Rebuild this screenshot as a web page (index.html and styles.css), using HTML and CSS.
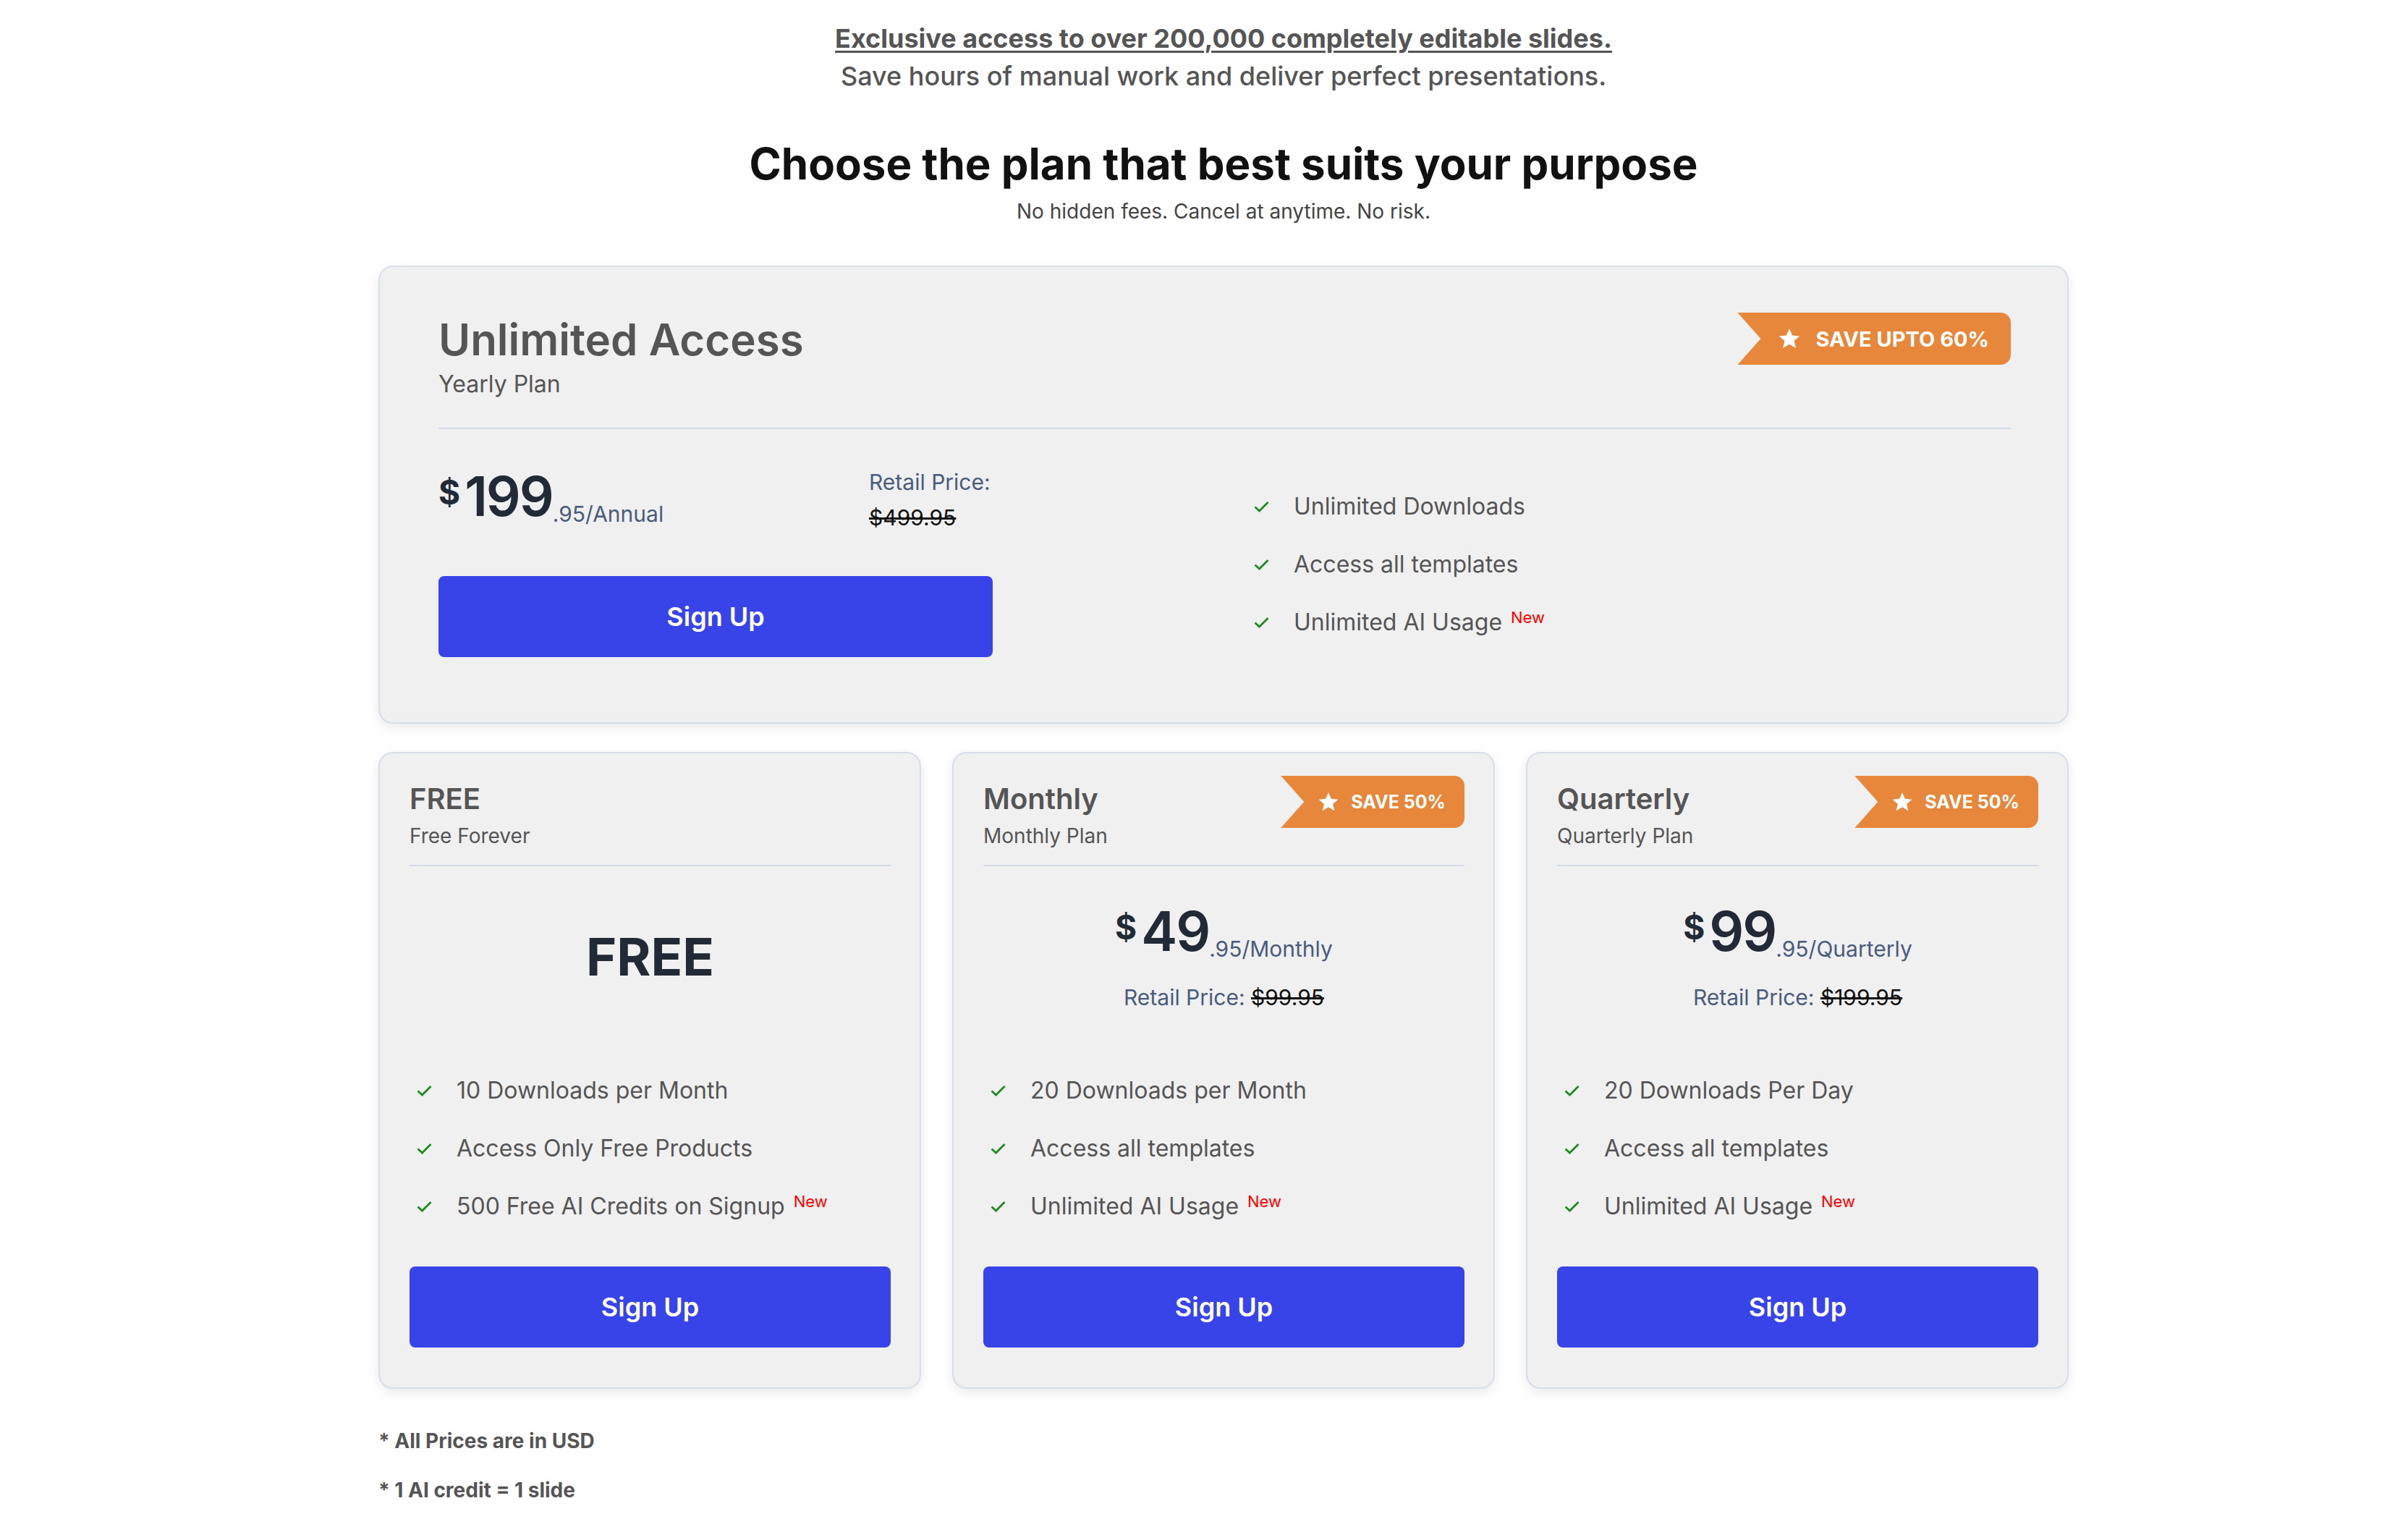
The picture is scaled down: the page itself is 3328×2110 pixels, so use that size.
FILE: index.html
```html
<!DOCTYPE html>
<html lang="en">
<head>
    <meta charset="UTF-8">
    <meta name="viewport" content="width=device-width, initial-scale=1.0">
    <link rel="stylesheet" href="styles.css">
    <title>Pricing</title>
</head>
<body>
    <div class="page">
        <header class="intro">
            <p class="intro-lead"><a href="#">Exclusive access to over 200,000 completely editable slides.</a></p>
            <p class="intro-sub">Save hours of manual work and deliver perfect presentations.</p>
            <h1>Choose the plan that best suits your purpose</h1>
            <p class="intro-note">No hidden fees. Cancel at anytime. No risk.</p>
        </header>

        <section class="plan plan-yearly">
            <div class="plan-head">
                <div>
                    <h2 class="yearly-title">Unlimited Access</h2>
                    <p class="yearly-sub">Yearly Plan</p>
                </div>
                <span class="badge badge-lg">
                    <svg class="star" viewBox="0 0 24 24"><path d="M12 1.5l3.1 7.1 7.6.7-5.8 5 1.8 7.5L12 17.8l-6.7 4 1.8-7.5-5.8-5 7.6-.7z"/></svg>
                    SAVE UPTO 60%
                </span>
            </div>
            <div class="divider"></div>
            <div class="yearly-body">
                <div class="yearly-price">
                    <div class="price price-left">
                        <span class="cur">$</span><span class="amt">199</span><span class="per">.95/Annual</span>
                    </div>
                    <div class="retail retail-stack">
                        <span class="retail-label">Retail Price:</span>
                        <s class="retail-old">$499.95</s>
                    </div>
                    <a href="#" class="btn btn-wide">Sign Up</a>
                </div>
                <ul class="features">
                    <li><svg class="check" viewBox="0 0 22 16"><path d="M2 8.5l6 5.5L20 2"/></svg><span>Unlimited Downloads</span></li>
                    <li><svg class="check" viewBox="0 0 22 16"><path d="M2 8.5l6 5.5L20 2"/></svg><span>Access all templates</span></li>
                    <li><svg class="check" viewBox="0 0 22 16"><path d="M2 8.5l6 5.5L20 2"/></svg><span>Unlimited AI Usage<sup class="new">New</sup></span></li>
                </ul>
            </div>
        </section>

        <div class="plans">
            <article class="plan plan-card">
                <div class="plan-head">
                    <div>
                        <h3 class="card-title">FREE</h3>
                        <p class="card-sub">Free Forever</p>
                    </div>
                </div>
                <div class="divider"></div>
                <div class="price-area">
                    <div class="free-label">FREE</div>
                </div>
                <ul class="features">
                    <li><svg class="check" viewBox="0 0 22 16"><path d="M2 8.5l6 5.5L20 2"/></svg><span>10 Downloads per Month</span></li>
                    <li><svg class="check" viewBox="0 0 22 16"><path d="M2 8.5l6 5.5L20 2"/></svg><span>Access Only Free Products</span></li>
                    <li><svg class="check" viewBox="0 0 22 16"><path d="M2 8.5l6 5.5L20 2"/></svg><span>500 Free AI Credits on Signup<sup class="new">New</sup></span></li>
                </ul>
                <a href="#" class="btn">Sign Up</a>
            </article>

            <article class="plan plan-card">
                <div class="plan-head">
                    <div>
                        <h3 class="card-title">Monthly</h3>
                        <p class="card-sub">Monthly Plan</p>
                    </div>
                    <span class="badge">
                        <svg class="star" viewBox="0 0 24 24"><path d="M12 1.5l3.1 7.1 7.6.7-5.8 5 1.8 7.5L12 17.8l-6.7 4 1.8-7.5-5.8-5 7.6-.7z"/></svg>
                        SAVE 50%
                    </span>
                </div>
                <div class="divider"></div>
                <div class="price-area">
                    <div class="price">
                        <span class="cur">$</span><span class="amt">49</span><span class="per">.95/Monthly</span>
                    </div>
                    <div class="retail">Retail Price: <s>$99.95</s></div>
                </div>
                <ul class="features">
                    <li><svg class="check" viewBox="0 0 22 16"><path d="M2 8.5l6 5.5L20 2"/></svg><span>20 Downloads per Month</span></li>
                    <li><svg class="check" viewBox="0 0 22 16"><path d="M2 8.5l6 5.5L20 2"/></svg><span>Access all templates</span></li>
                    <li><svg class="check" viewBox="0 0 22 16"><path d="M2 8.5l6 5.5L20 2"/></svg><span>Unlimited AI Usage<sup class="new">New</sup></span></li>
                </ul>
                <a href="#" class="btn">Sign Up</a>
            </article>

            <article class="plan plan-card">
                <div class="plan-head">
                    <div>
                        <h3 class="card-title">Quarterly</h3>
                        <p class="card-sub">Quarterly Plan</p>
                    </div>
                    <span class="badge">
                        <svg class="star" viewBox="0 0 24 24"><path d="M12 1.5l3.1 7.1 7.6.7-5.8 5 1.8 7.5L12 17.8l-6.7 4 1.8-7.5-5.8-5 7.6-.7z"/></svg>
                        SAVE 50%
                    </span>
                </div>
                <div class="divider"></div>
                <div class="price-area">
                    <div class="price">
                        <span class="cur">$</span><span class="amt">99</span><span class="per">.95/Quarterly</span>
                    </div>
                    <div class="retail">Retail Price: <s>$199.95</s></div>
                </div>
                <ul class="features">
                    <li><svg class="check" viewBox="0 0 22 16"><path d="M2 8.5l6 5.5L20 2"/></svg><span>20 Downloads Per Day</span></li>
                    <li><svg class="check" viewBox="0 0 22 16"><path d="M2 8.5l6 5.5L20 2"/></svg><span>Access all templates</span></li>
                    <li><svg class="check" viewBox="0 0 22 16"><path d="M2 8.5l6 5.5L20 2"/></svg><span>Unlimited AI Usage<sup class="new">New</sup></span></li>
                </ul>
                <a href="#" class="btn">Sign Up</a>
            </article>
        </div>

        <div class="notes">
            <p>* All Prices are in USD</p>
            <p>* 1 AI credit = 1 slide</p>
        </div>
    </div>
</body>
</html>
```

FILE: styles.css
```css
* {
    margin: 0;
    padding: 0;
    box-sizing: border-box;
}
body {
    background: #fff;
    font-family: Inter, "Noto Sans", sans-serif;
    color: #555;
}
.page {
    width: 2336px;
    margin-left: 523px;
}

/* intro */
.intro {
    text-align: center;
}
.intro-lead {
    padding-top: 33px;
    font-size: 36px;
    line-height: 40px;
    font-weight: 700;
}
.intro-lead a {
    color: #555;
    text-decoration: underline;
    text-underline-offset: 4px;
    text-decoration-thickness: 3px;
}
.intro-sub {
    margin-top: 12px;
    font-size: 36px;
    line-height: 40px;
    font-weight: 500;
}
.intro h1 {
    margin-top: 65px;
    font-size: 60px;
    line-height: 72px;
    font-weight: 700;
    color: #111;
}
.intro-note {
    margin-top: 12px;
    font-size: 28px;
    line-height: 36px;
    color: #444;
}

/* cards */
.plan {
    background: #f0f0f0;
    border: 2px solid #d6dfea;
    border-radius: 20px;
    box-shadow: 0 5px 16px rgba(0, 0, 0, 0.09);
}
.plan-head {
    display: flex;
    justify-content: space-between;
    align-items: flex-start;
}
.divider {
    height: 2px;
    background: #d3dce8;
}

.plan-yearly {
    margin-top: 57px;
    padding: 64px 78px 90px 81px;
}
.yearly-title {
    font-size: 60px;
    line-height: 72px;
    font-weight: 600;
    color: #555;
}
.yearly-sub {
    margin-top: 6px;
    font-size: 32px;
    line-height: 40px;
}
.plan-yearly .divider {
    margin-top: 40px;
}
.yearly-body {
    margin-top: 53px;
    display: grid;
    grid-template-columns: 1117px 1fr;
}
.yearly-price {
    display: grid;
    grid-template-columns: 595px auto;
    align-items: start;
}
.price-left {
    text-align: left;
}
.retail-stack {
    display: flex;
    flex-direction: column;
    align-items: flex-start;
}
.retail-old {
    margin-top: 9px;
}
.btn-wide {
    grid-column: 1 / -1;
    width: 766px;
    margin-top: 61px;
}
.plan-yearly .features {
    margin-top: 34px;
}

.plans {
    margin-top: 39px;
    display: grid;
    grid-template-columns: repeat(3, 1fr);
    column-gap: 43px;
}
.plan-card {
    display: flex;
    flex-direction: column;
    padding: 34px 40px 55px 41px;
}
.card-title {
    margin-top: 5px;
    font-size: 40px;
    line-height: 48px;
    font-weight: 600;
    color: #555;
}
.card-sub {
    margin-top: 9px;
    font-size: 28px;
    line-height: 36px;
}
.plan-card .divider {
    margin-top: 22px;
}
.price-area {
    height: 250px;
    display: flex;
    flex-direction: column;
    justify-content: center;
    align-items: center;
}
.free-label {
    font-size: 72px;
    line-height: 80px;
    font-weight: 700;
    color: #222a36;
}
.plan-card .retail {
    margin-top: 31px;
}
.plan-card .features {
    margin-top: 40px;
}
.plan-card .btn {
    margin-top: 63px;
}

/* price */
.price {
    font-size: 75px;
    line-height: 80px;
    white-space: nowrap;
    color: #222a36;
}
.cur {
    display: inline-block;
    vertical-align: top;
    margin-right: 6px;
    font-size: 46px;
    line-height: 68px;
    font-weight: 700;
}
.amt {
    font-weight: 600;
    letter-spacing: -2px;
}
.per {
    font-size: 30px;
    line-height: 30px;
    color: #4a5b7b;
    vertical-align: -8px;
}
.retail {
    font-size: 30px;
    line-height: 40px;
    color: #4a5b7b;
}
.retail s {
    color: #111;
}

/* badge */
.badge {
    display: inline-flex;
    align-items: center;
    gap: 16px;
    height: 72px;
    margin-top: -3px;
    padding: 0 26px 0 51px;
    background: #e6873b;
    color: #fff;
    font-size: 25px;
    font-weight: 700;
    white-space: nowrap;
    border-radius: 0 14px 14px 0;
    clip-path: polygon(0 0, 100% 0, 100% 100%, 0 100%, 32px 50%);
}
.badge-lg {
    margin-top: -1px;
    padding: 0 30px 0 56px;
    gap: 20px;
    font-size: 29px;
}
.star {
    width: 30px;
    height: 30px;
    fill: #fff;
}
.badge-lg .star {
    width: 32px;
    height: 32px;
}

/* features */
.features {
    list-style: none;
    display: flex;
    flex-direction: column;
    gap: 40px;
}
.features li {
    display: flex;
    align-items: center;
    gap: 33px;
    padding-left: 9px;
    font-size: 32px;
    line-height: 40px;
    color: #555;
}
.check {
    width: 23px;
    height: 16px;
    flex-shrink: 0;
    fill: none;
    stroke: #1f8a1f;
    stroke-width: 2.8;
}
.new {
    margin-left: 12px;
    font-size: 22px;
    color: #ff0000;
    vertical-align: 10px;
    line-height: 0;
}

/* button */
.btn {
    display: block;
    height: 112px;
    line-height: 112px;
    background: #3944e8;
    border-radius: 8px;
    color: #fff;
    text-align: center;
    text-decoration: none;
    font-size: 36px;
    font-weight: 600;
}

/* notes */
.notes {
    margin-top: 55px;
    font-size: 28px;
    line-height: 34px;
    font-weight: 700;
    color: #555;
}
.notes p + p {
    margin-top: 34px;
}
```
